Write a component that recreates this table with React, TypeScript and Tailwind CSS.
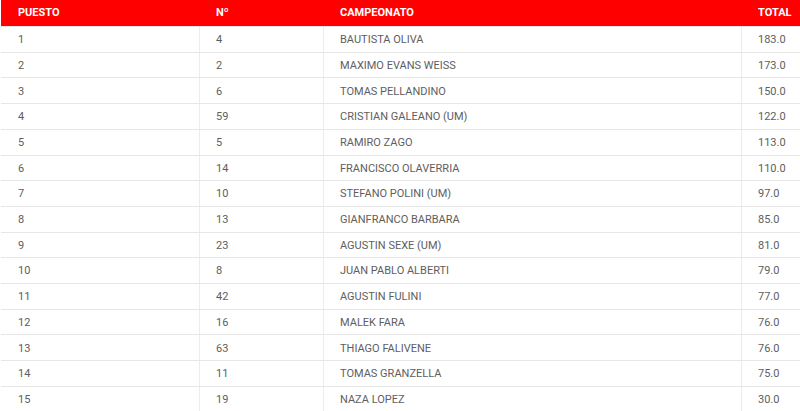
import React from "react";

const rows: [string, string, string, string][] = [
  ["1", "4", "BAUTISTA OLIVA", "183.0"],
  ["2", "2", "MAXIMO EVANS WEISS", "173.0"],
  ["3", "6", "TOMAS PELLANDINO", "150.0"],
  ["4", "59", "CRISTIAN GALEANO (UM)", "122.0"],
  ["5", "5", "RAMIRO ZAGO", "113.0"],
  ["6", "14", "FRANCISCO OLAVERRIA", "110.0"],
  ["7", "10", "STEFANO POLINI (UM)", "97.0"],
  ["8", "13", "GIANFRANCO BARBARA", "85.0"],
  ["9", "23", "AGUSTIN SEXE (UM)", "81.0"],
  ["10", "8", "JUAN PABLO ALBERTI", "79.0"],
  ["11", "42", "AGUSTIN FULINI", "77.0"],
  ["12", "16", "MALEK FARA", "76.0"],
  ["13", "63", "THIAGO FALIVENE", "76.0"],
  ["14", "11", "TOMAS GRANZELLA", "75.0"],
  ["15", "19", "NAZA LOPEZ", "30.0"],
];

const cols = "grid grid-cols-[199px_124px_418px_1fr]";

export default function App() {
  return (
    <div
      className="w-[800px] h-[411px] overflow-hidden bg-white pl-px text-[11px]"
      style={{ fontFamily: "Roboto, 'Liberation Sans', sans-serif" }}
    >
      <div className={`${cols} h-[26px] bg-[#ff0000] text-white font-bold items-center`}>
        <div className="pl-[17px]">PUESTO</div>
        <div className="pl-4">Nº</div>
        <div className="pl-4">CAMPEONATO</div>
        <div className="pl-4">TOTAL</div>
      </div>
      {rows.map((r, i) => (
        <div
          key={i}
          className={`${cols} h-[25.71px] shrink-0 border-t border-[#e6e6e6] text-[#5e5e5e]`}
        >
          <div className="pl-[17px] pt-[2px] flex items-center border-r border-[#ececec]">{r[0]}</div>
          <div className="pl-4 pt-[2px] flex items-center border-r border-[#ececec]">{r[1]}</div>
          <div className="pl-4 pt-[2px] flex items-center border-r border-[#ececec]">{r[2]}</div>
          <div className="pl-4 pt-[2px] flex items-center">{r[3]}</div>
        </div>
      ))}
    </div>
  );
}
